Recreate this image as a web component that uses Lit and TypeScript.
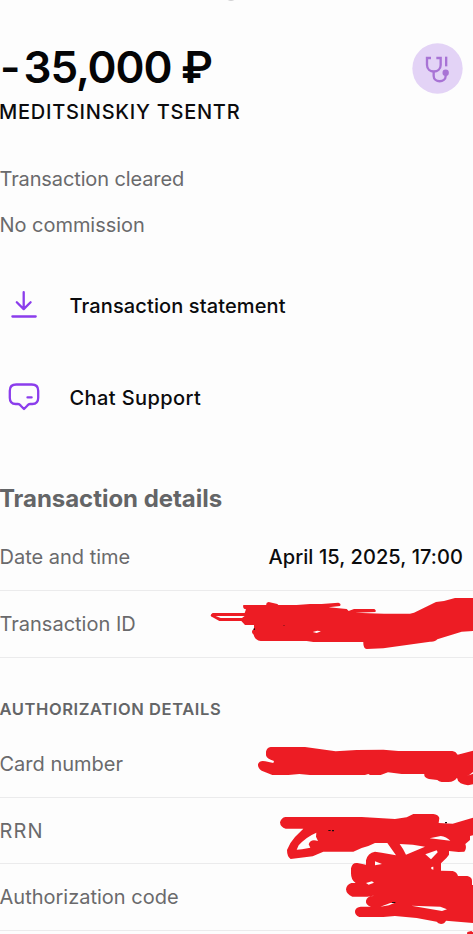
import { LitElement, html, svg, css } from "lit";
import { customElement } from "lit/decorators.js";

const downloadIcon = svg`<path d="M15.700 3.200V20M8.800 13.200l6.900 6.900 6.900-6.900"/><path d="M4.400 27.500H27.700"/>`;
const chatIcon = svg`<path d="M8.300 3.500H23.700C28 3.500 30.200 5.700 30.200 9.700V16.800C30.200 20.800 28.200 23 24.300 23H22C20.600 23 20 23.800 19 25L16 28L13 25C12 23.800 11.400 23 10 23H7.700C3.800 23 1.800 20.800 1.800 16.800V9.700C1.800 5.700 4 3.500 8.300 3.500Z"/><path d="M19.500 16.400H23.600"/>`;

@customElement("app-root")
export class AppRoot extends LitElement {
  static styles = css`
    :host {
      display: block;
      position: relative;
      width: 473px;
      height: 934px;
      overflow: hidden;
      background: #fdfdfd;
      color: #0b0b0d;
      font-family: Inter, sans-serif;
      font-size: 20px;
      white-space: nowrap;
    }
    * { box-sizing: border-box; }
    .grabber {
      position: absolute;
      left: 225px;
      top: -11px;
      width: 12px;
      height: 12px;
      border-radius: 50%;
      background: #d2d2d4;
    }
    .header {
      display: flex;
      justify-content: space-between;
      align-items: flex-start;
      padding: 43px 10px 0 0;
    }
    .amount {
      display: flex;
      height: 48px;
      line-height: 48px;
      font-size: 44px;
      font-weight: 600;
      letter-spacing: -1.1px;
      color: #050506;
    }
    .minus { width: 23.500px; }
    .sum { width: 157.500px; }
    .merchant {
      height: 42px;
      line-height: 42px;
      margin-left: -1px;
      font-weight: 500;
      letter-spacing: 0.74px;
    }
    .category { width: 51px; height: 51px; display: block; }
    .notes { margin-top: 23px; color: #6a6a6c; }
    .note { height: 46px; line-height: 46px; margin-left: -0.500px; }
    .cleared { letter-spacing: -0.12px; }
    .free { letter-spacing: -0.04px; }
    .actions { margin-top: 11px; }
    .action {
      display: flex;
      align-items: center;
      height: 92px;
      padding-left: 8px;
      font-weight: 500;
    }
    .action span { padding-top: 1px; }
    .action svg {
      width: 32px;
      height: 32px;
      margin-right: 29.500px;
      fill: none;
      stroke: #8b3dec;
      stroke-width: 2.3;
      stroke-linecap: round;
      stroke-linejoin: round;
    }
    .statement { letter-spacing: 0.12px; }
    .chat { letter-spacing: 0.4px; }
    h2, h3 { margin: 0; color: #646567; }
    h2 {
      height: 30px;
      line-height: 30px;
      margin-top: 41px;
      margin-left: -1px;
      font-size: 24px;
      font-weight: 650;
      letter-spacing: -0.04px;
    }
    h3 {
      height: 24px;
      line-height: 24px;
      margin-top: 39px;
      margin-left: -0.500px;
      font-size: 16.500px;
      font-weight: 600;
      letter-spacing: 0.6px;
    }
    .rows { margin-top: 10px; }
    .row {
      display: flex;
      align-items: center;
      justify-content: space-between;
      height: 67px;
      padding-right: 10px;
      border-bottom: 1px solid #ebebec;
      color: #6a6a6c;
    }
    .row > span:first-child { margin-left: -0.500px; }
    .short { height: 66px; }
    .short span { letter-spacing: 1.1px; }
    .value { color: #0b0b0d; font-weight: 500; letter-spacing: 0.080px; }
    .marker {
      position: absolute;
      left: 0;
      top: 0;
      width: 473px;
      height: 934px;
      fill: #ed1c24;
    }
  `;

  render() {
    return html`
      <div class="grabber"></div>
      <div class="header">
        <div>
          <div class="amount"><span class="minus">-</span><span class="sum">35,000</span><span>₽</span></div>
          <div class="merchant">MEDITSINSKIY TSENTR</div>
        </div>
        <svg class="category" viewBox="38 40 153 153">
          <circle cx="114.500" cy="116.500" r="75.500" fill="#e3d3f6" />
          <g fill="none" stroke="#a873d5" stroke-width="7">
            <path d="M95 85H83V106C83 132 124 132 124 106V85H111" />
            <path d="M103 126V139C103 160 139 160 139 139V130" />
            <path d="M140.500 81V110" />
          </g>
          <circle cx="139" cy="129" r="9.500" fill="#a873d5" />
        </svg>
      </div>

      <div class="notes">
        <div class="note cleared">Transaction cleared</div>
        <div class="note free">No commission</div>
      </div>

      <div class="actions">
        <div class="action statement"><svg viewBox="0 0 32 32">${downloadIcon}</svg><span>Transaction statement</span></div>
        <div class="action chat"><svg viewBox="0 0 32 32">${chatIcon}</svg><span>Chat Support</span></div>
      </div>

      <h2>Transaction details</h2>
      <div class="rows">
        <div class="row"><span>Date and time</span><span class="value">April 15, 2025, 17:00</span></div>
        <div class="row"><span>Transaction ID</span></div>
      </div>

      <h3>AUTHORIZATION DETAILS</h3>
      <div class="rows">
        <div class="row"><span>Card number</span></div>
        <div class="row short"><span>RRN</span></div>
        <div class="row"><span>Authorization code</span></div>
      </div>

      <svg class="marker" viewBox="0 0 473 934">
        <g transform="translate(200 590) scale(.33333)">
          <path fill-rule="evenodd" d="M38 69H134L138 58Q127 56 130 45H199Q197 38 206 36L232 42L235 45H290L330 42L365 42L415 38Q425 41 420 48L386 52L440 57L446 63L462 57H523Q530 61 526 66L465 68L552 71H630L642 68L708 36Q735 34 765 24H819V123L785 125L712 148Q706 156 690 155L550 175L500 177Q489 175 490 156H340L320 153H182Q164 150 161 134Q150 125 162 116V105H135L124 93H58L38 82Q26 77 38 69ZM47 78L62 84H126L134 78ZM338 126L352 122L363 124L350 129Z" />
          <path fill="#220d0e" d="M161 115h4v5h-4z" />
          <path fill="#8d1519" d="M249 106h6v2h-6z" />
        </g>
        <g transform="translate(240 735) scale(.33333)">
          <path d="M92 36H195L287 49L350 45L430 44L475 48H637Q647 49 653 59L699 47V148Q680 154 662 145Q652 138 651 128Q644 140 625 141H605Q596 140 592 135L567 132Q551 128 553 117H485L444 112L422 120H390L385 117L375 120H210L178 117L145 120H97L65 107Q53 99 54 88Q58 75 76 79L100 84L102 78Q80 72 78 61V50Q80 38 92 36Z" />
          <path fill="#fdfdfd" d="M678 122Q690 121 699 111V116Q690 120 678 122Z" />
        </g>
        <g transform="translate(270 800) scale(.33333)">
          <path d="M46 51H275L375 57L410 52L430 42H490Q505 44 508 54L506 69L548 71L609 53V106L600 108V120L586 132Q591 145 583 155L566 156L537 153V164L530 173L513 190V212L548 213Q561 216 564 228H592Q606 231 606 242V255H609V369L528 362Q523 372 513 372Q504 371 500 365L440 354L375 348L340 351H268Q254 345 255 333Q258 321 272 320H303Q286 314 288 302Q291 288 310 288V287L292 290H247Q229 283 228 268Q230 253 244 249H257Q243 241 243 220V205Q247 187 262 189L288 194V181Q293 158 315 155L335 158L378 166L352 129H315L295 138L275 144L250 155H160L128 169L62 177Q51 170 51 150Q58 130 75 111L100 86H47Q31 82 30 67Q34 53 46 51Z" />
          <g fill="#fdfdfd">
            <path d="M80 149L86 136Q108 111 139 98L138 110L144 123Q122 115 116 133L121 143L96 148Z" />
            <path d="M389 132Q430 132 465 140L408 164Q399 145 389 132Z" />
            <path d="M479 115L512 108Q529 110 541 122Z" />
            <path d="M466 163L500 151L503 157L483 178Z" />
            <path d="M315 196V184L336 192ZM484 201L490 200V209L484 207ZM288 249L306 244L312 248L296 254ZM331 320L361 309L373 309L357 316ZM424 317L511 320L531 328L516 333Z" />
          </g>
          <path fill="#1d0c0d" d="M175 90h7v3h-7zM186 90h6v4h-6zM525 66h6v4h-6zM366 306h10v3h-10z" />
          <path d="M592 396L604 393L609 397V402H591Z" />
        </g>
      </svg>
    `;
  }
}
